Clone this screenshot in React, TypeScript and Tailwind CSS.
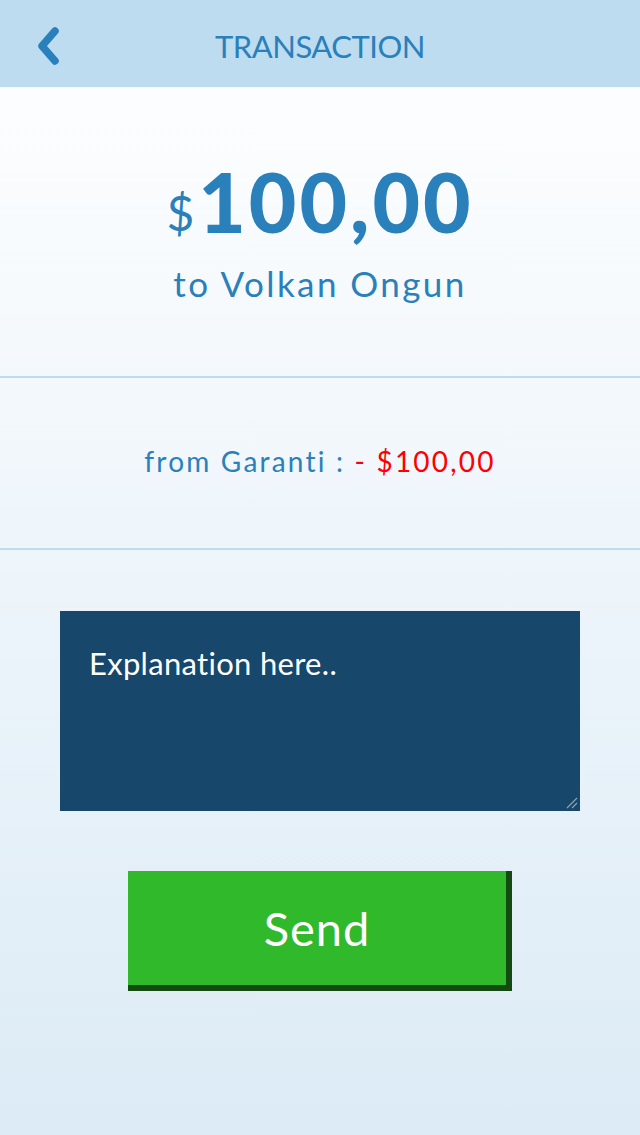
export default function App() {
  return (
    <div
      className="w-[640px] h-[1135px] flex flex-col bg-gradient-to-b from-[#ffffff] to-[#dcebf6]"
      style={{ fontFamily: 'Lato, "Open Sans", sans-serif' }}
    >
      <header className="relative h-[87px] bg-[#bddcf0] flex items-center justify-center shrink-0">
        <svg className="absolute left-[35px] top-[27px]" width="26" height="38" viewBox="0 0 26 38">
          <path d="M20 4 L7 19 L20 34" fill="none" stroke="#2a80bb" strokeWidth="7.5" strokeLinecap="round" strokeLinejoin="round" />
        </svg>
        <h1 className="text-[#2a80bb] text-[31px] tracking-[-0.5px] mt-[6px]">TRANSACTION</h1>
      </header>

      <section className="h-[291px] flex flex-col items-center pt-[73px] border-b-2 border-[#bcdcef]">
        <div className="flex items-start text-[#2a80bb] leading-none">
          <span className="text-[48px] mt-[29px] mr-[4px]">$</span>
          <span className="text-[82px] font-black tracking-[3px]">100,00</span>
        </div>
        <div className="text-[#2a80bb] text-[35px] tracking-[2.4px] mt-[24px] leading-none">to Volkan Ongun</div>
      </section>

      <section className="h-[172px] flex items-center justify-center border-b-2 border-[#bcdcef] pb-[4px]">
        <div className="text-[28px] tracking-[2.2px] leading-none">
          <span className="text-[#2a80bb]">from Garanti : </span>
          <span className="text-[#ff0000]">- $100,00</span>
        </div>
      </section>

      <div className="flex flex-col items-center pt-[61px]">
        <div className="relative w-[520px] h-[200px] bg-[#17476a] px-[29px] pt-[37px]">
          <span className="text-white text-[31px] tracking-[0.3px] leading-none">Explanation here..</span>
          <svg className="absolute right-[2px] bottom-[2px]" width="12" height="12" viewBox="0 0 12 12">
            <path d="M1 11 L11 1 M6 11 L11 6" stroke="#8fa3b3" strokeWidth="1.2" />
          </svg>
        </div>

        <button className="mt-[60px] w-[384px] h-[120px] bg-[#134a11] relative">
          <div className="absolute left-0 top-0 w-[378px] h-[114px] bg-[#30b92a] flex items-center justify-center">
            <span className="text-white text-[47px] tracking-[1px] leading-none">Send</span>
          </div>
        </button>
      </div>
    </div>
  )
}
